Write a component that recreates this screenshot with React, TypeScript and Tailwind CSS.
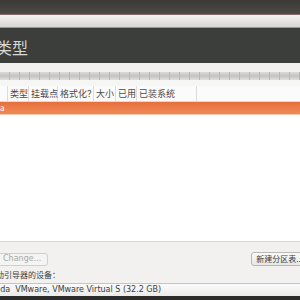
const cols = [
  { label: "类型", w: 21 },
  { label: "挂载点", w: 29 },
  { label: "格式化？", w: 36 },
  { label: "大小", w: 22 },
  { label: "已用", w: 21 },
  { label: "已装系统", w: 60 },
];

export default function App() {
  const font = { fontFamily: '"Noto Sans CJK SC", "DejaVu Sans", sans-serif' };
  return (
    <div className="w-[300px] h-[300px] overflow-hidden bg-[#f2f1f0] flex flex-col text-[#3c3c3c]" style={font}>
      {/* window top */}
      <div className="h-[14px] bg-gradient-to-b from-[#3a3935] to-[#4c4a45] shrink-0" />
      <div className="h-[14px] bg-gradient-to-b from-[#f4f3f2] to-[#d6d5d3] border-t border-[#8a6a6a] border-b border-b-[#9a9994] shrink-0" />
      {/* header */}
      <div className="h-[35px] bg-[#3b3e3b] flex items-center shrink-0">
        <span className="text-[16px] text-[#d8d8d6] leading-none -ml-[4px] mt-[2px]">类型</span>
      </div>
      <div className="h-[9px] shrink-0" />
      {/* ruler */}
      <div className="h-[8px] shrink-0 bg-gradient-to-b from-[#dddcdb] via-[#c4c3c1] to-[#e2e1e0] flex">
        {Array(30).fill(null).map((_, i) => (
          <div key={i} className="w-[10px] h-full border-r border-[#b9b8b6] shrink-0" />
        ))}
      </div>
      <div className="h-[6px] shrink-0 bg-[#f6f6f5]" />
      {/* table */}
      <div className="flex-1 bg-white flex flex-col">
        <div className="h-[16px] flex items-center border-b border-[#dcdcdc] bg-[#fbfbfb] shrink-0">
          <div className="w-[8px] h-full border-r border-[#dcdcdc]" />
          {cols.map((c) => (
            <div
              key={c.label}
              className="h-full flex items-center pl-[2px] border-r border-[#dcdcdc] text-[9px] text-[#4a4a4a] whitespace-nowrap shrink-0"
              style={{ width: c.w }}
            >
              {c.label}
            </div>
          ))}
        </div>
        <div className="h-[13px] bg-gradient-to-b from-[#e66f3c] to-[#f08a58] border-b border-[#f5c6ae] flex items-center shrink-0">
          <span className="text-[8px] text-white leading-none">a</span>
        </div>
        <div className="flex-1" />
      </div>
      {/* bottom controls */}
      <div className="h-[55px] shrink-0 border-t border-[#d6d5d3] flex flex-col">
        <div className="flex items-center justify-between mt-[10px]">
          <div className="-ml-[4px] h-[13px] px-[6px] border border-[#d0cfcc] rounded-[3px] bg-[#f4f4f3] text-[8px] text-[#a8a8a6] flex items-center" style={{ fontFamily: '"DejaVu Sans", sans-serif' }}>
            Change...
          </div>
          <div className="-mr-[8px] h-[14px] px-[4px] border border-[#b9b8b5] rounded-[3px] bg-gradient-to-b from-[#fafafa] to-[#e8e7e6] text-[8px] text-[#3c3c3c] flex items-center whitespace-nowrap">
            新建分区表...
          </div>
        </div>
        <div className="text-[8px] leading-none mt-[5px] whitespace-nowrap -ml-[4px]">动引导器的设备：</div>
        <div className="mt-[4px] h-[17px] border-t border-b border-[#c6c5c2] bg-gradient-to-b from-[#fbfbfb] to-[#ecebea] flex items-center text-[8px] whitespace-nowrap -ml-[4px]" style={{ fontFamily: '"DejaVu Sans", sans-serif' }}>
          <span>sda&nbsp; VMware, VMware Virtual S (32.2 GB)</span>
        </div>
      </div>
      <div className="h-[4px] bg-[#2c2c2a] shrink-0" />
    </div>
  );
}
